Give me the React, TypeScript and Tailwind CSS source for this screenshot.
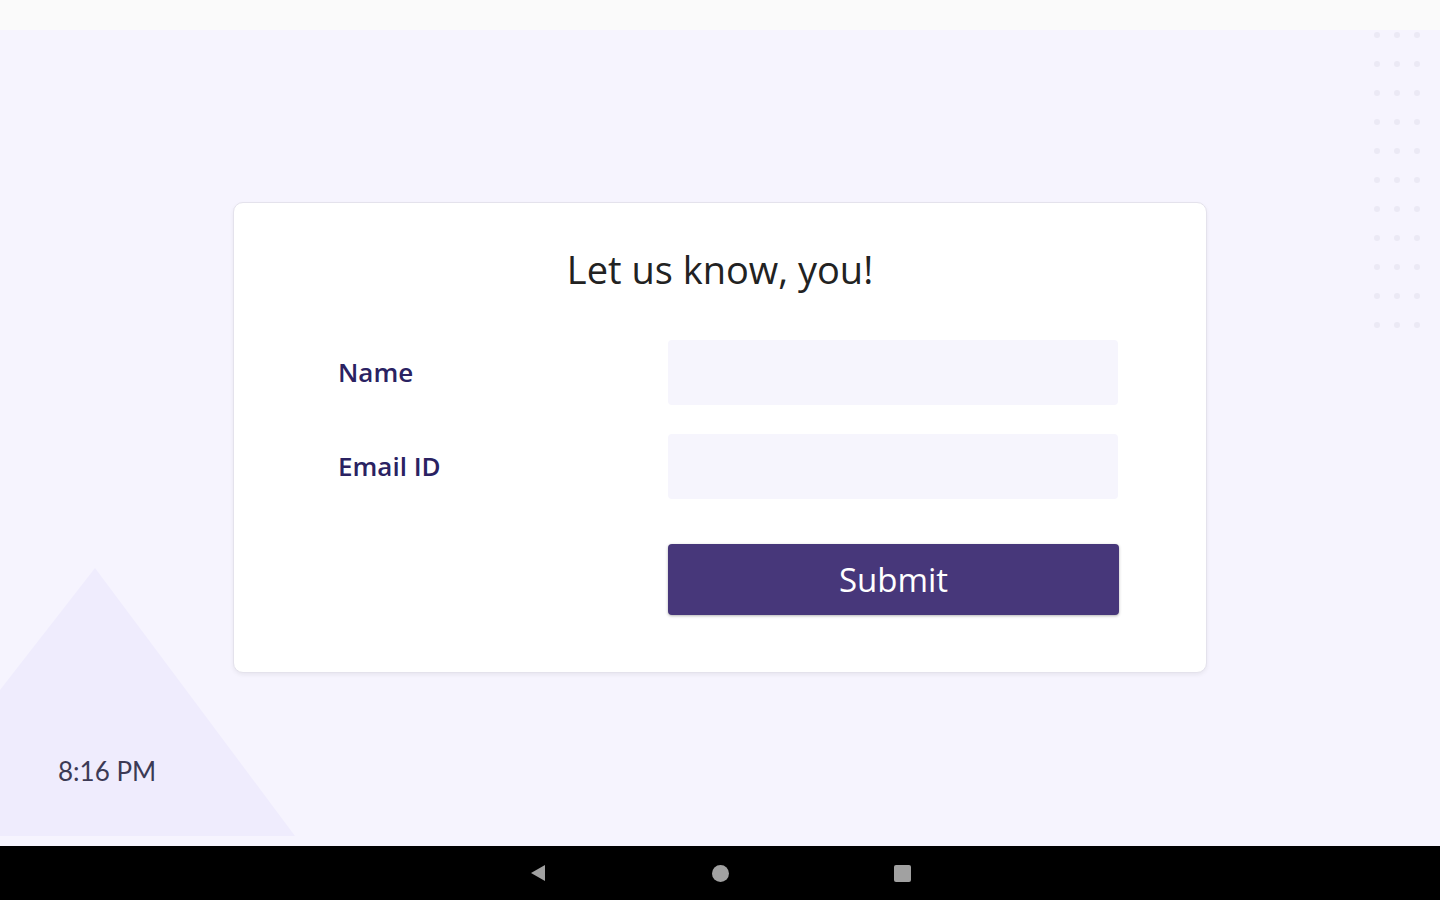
import React from 'react'

const DOT_ROWS = 11
const DOT_COLS = 3

function DotGrid() {
  return (
    <div className="grid grid-cols-3 gap-x-[14px] gap-y-[23px]">
      {Array.from({ length: DOT_ROWS * DOT_COLS }).map((_, i) => (
        <span key={i} className="h-[6px] w-[6px] rounded-full bg-[#ebe9f5]" />
      ))}
    </div>
  )
}

function Field({ label }: { label: string }) {
  return (
    <div className="flex items-center">
      <label className="w-[330px] text-[26px] font-semibold text-[#2a2262]">{label}</label>
      <input className="h-[65px] w-[450px] rounded-[4px] bg-[#f6f5fd] px-4 text-[22px] outline-none" />
    </div>
  )
}

export default function App() {
  return (
    <div className="flex h-[900px] w-[1440px] flex-col overflow-hidden bg-[#f6f4fe] font-['Open_Sans',sans-serif]">
      <div className="h-[30px] shrink-0 bg-[#fafafa]" />

      <div className="relative flex-1">
        {/* decorative background */}
        <svg className="absolute left-0 top-0" width="300" height="816" viewBox="0 0 300 816">
          <polygon points="95,538 295,806 0,806 0,660" fill="#efecfd" />
        </svg>
        <div className="absolute right-[20px] top-[2px]">
          <DotGrid />
        </div>

        <div className="relative flex justify-center pt-[172px]">
          <div className="w-[974px] rounded-[10px] border border-[#e4e2ec] bg-white pb-[57px] pl-[104px] pt-[44px] shadow-[0_2px_4px_rgba(0,0,0,0.06)]">
            <h1 className="-ml-[104px] text-center text-[38px] leading-[44px] text-[#222222]">Let us know, you!</h1>
            <div className="mt-[49px] flex flex-col gap-[29px]">
              <Field label="Name" />
              <Field label="Email ID" />
            </div>
            <div className="mt-[45px] pl-[330px]">
              <button className="h-[71px] w-[451px] rounded-[4px] bg-[#47377a] text-[33px] text-white shadow-[0_1px_3px_rgba(0,0,0,0.3)]">
                Submit
              </button>
            </div>
          </div>
        </div>

        <div className="absolute left-[58px] top-[722px] font-['Lato',sans-serif] text-[26px] text-[#3c3a55]">8:16 PM</div>
      </div>

      <div className="flex h-[54px] shrink-0 items-center justify-center gap-[165px] bg-black">
        <svg width="18" height="18" viewBox="0 0 18 18">
          <polygon points="2,9 16,1 16,17" fill="#a1a1a1" />
        </svg>
        <span className="h-[17px] w-[17px] rounded-full bg-[#a1a1a1]" />
        <span className="h-[17px] w-[17px] rounded-[2px] bg-[#a1a1a1]" />
      </div>
    </div>
  )
}
